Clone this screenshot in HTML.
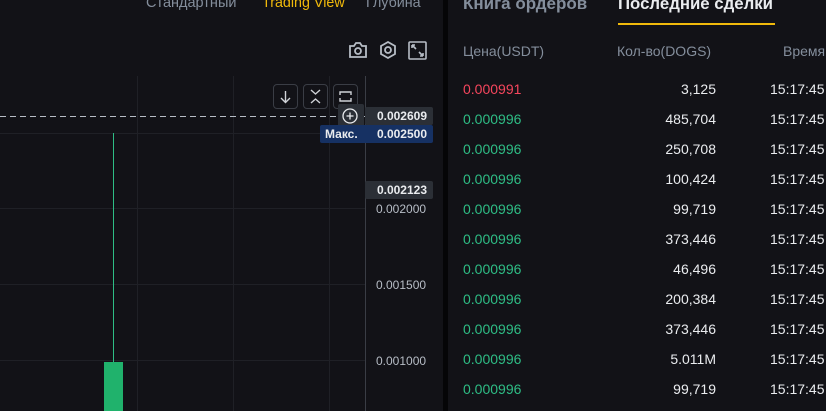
<!DOCTYPE html>
<html><head><meta charset="utf-8"><style>
*{margin:0;padding:0;box-sizing:border-box}
body{width:826px;height:411px;overflow:hidden;background:#121217;font-family:"Liberation Sans","DejaVu Sans",sans-serif;position:relative}
.a{position:absolute;white-space:nowrap}
.gv{position:absolute;top:76px;bottom:0;width:1px;background:#1f2026}
.gh{position:absolute;left:0;width:365px;height:1px;background:#1f2026}
.tag{position:absolute;height:18px;font-size:12px;font-weight:bold;color:#eaecef;line-height:18px;padding-right:6px;text-align:right}
.ax{position:absolute;left:376px;font-size:12px;color:#b7bdc6}
.btn{position:absolute;top:84px;width:25px;height:25px;border:1px solid #3a3d45;border-radius:4px}
.row{position:absolute;left:463px;font-size:14px;height:20px;line-height:20px}
.p{position:absolute;left:0;color:#2ebd85}
.q{position:absolute;left:150px;width:103px;text-align:right;color:#eaecef}
.t{position:absolute;left:307px;color:#eaecef}
</style></head><body>
<div class="a" style="left:146px;top:-5px;font-size:14.5px;color:#848e9c">Стандартный</div>
<div class="a" style="left:262px;top:-5px;font-size:14.3px;color:#f0b90b">Trading View</div>
<div class="a" style="left:366px;top:-5px;font-size:14.3px;color:#848e9c">Глубина</div>
<svg class="a" style="left:348px;top:41px" width="20" height="18" viewBox="0 0 20 18" fill="none" stroke="#b7bdc6" stroke-width="1.8"><path d="M2 5h4l2-3h4l2 3h4v11H2z"/><circle cx="10" cy="10" r="3"/></svg>
<svg class="a" style="left:378px;top:40px" width="20" height="20" viewBox="0 0 20 20" fill="none" stroke="#b7bdc6" stroke-width="1.8"><path d="M10 2l7 4v8l-7 4-7-4V6z"/><circle cx="10" cy="10" r="3"/></svg>
<svg class="a" style="left:408px;top:41px" width="19" height="19" viewBox="0 0 19 19" fill="none" stroke="#b7bdc6" stroke-width="1.6"><rect x="1" y="1" width="17" height="17" rx="1"/><path d="M4 4l4 4M4 4h3M4 4v3M15 15l-4-4M15 15h-3M15 15v-3"/></svg>
<div class="gv" style="left:137px"></div><div class="gv" style="left:233px"></div><div class="gv" style="left:329px"></div>
<div class="gh" style="top:133px"></div><div class="gh" style="top:208px"></div><div class="gh" style="top:284px"></div><div class="gh" style="top:360px"></div>
<div style="position:absolute;left:365px;top:76px;bottom:0;width:1px;background:#3a3d45"></div>
<svg class="a" style="left:0;top:116px" width="365" height="2"><line x1="0" y1="0.5" x2="365" y2="0.5" stroke="#b7bdc6" stroke-width="1" stroke-dasharray="6 4"/></svg>
<div style="position:absolute;left:113px;top:133px;width:1px;height:230px;background:#2ebd85"></div>
<div style="position:absolute;left:104px;top:362px;width:19px;height:49px;background:#20b26c"></div>
<div class="btn" style="left:273px"></div><div class="btn" style="left:303px"></div><div class="btn" style="left:333px"></div>
<svg class="a" style="left:273px;top:84px" width="25" height="25" fill="none" stroke="#d0d3d8" stroke-width="1.4"><path d="M12.5 7v11M8 14l4.5 4.5 4.5-4.5"/></svg>
<svg class="a" style="left:303px;top:84px" width="25" height="25" fill="none" stroke="#d0d3d8" stroke-width="1.4"><path d="M8 6l4.5 4 4.5-4M8 19l4.5-4 4.5 4"/></svg>
<svg class="a" style="left:333px;top:84px" width="25" height="25" fill="none" stroke="#d0d3d8" stroke-width="1.4"><path d="M7 11V8h11v3M7 14v3h11v-3"/></svg>
<div style="position:absolute;left:338px;top:104px;width:26px;height:24px;background:#2b2f36;border-radius:2px"></div>
<svg class="a" style="left:341px;top:107px" width="18" height="18" fill="none" stroke="#eaecef" stroke-width="1.3"><circle cx="9" cy="9" r="7"/><path d="M9 5.5v7M5.5 9h7"/></svg>
<div class="tag" style="left:365px;top:107px;width:68px;background:#2b2f36;border-radius:2px">0.002609</div>
<div class="tag" style="left:320px;top:125px;width:113px;background:#163163;border-radius:2px"><span style="position:absolute;left:5px">Макс.</span>0.002500</div>
<div class="tag" style="left:365px;top:181px;width:68px;background:#2b2f36;border-radius:2px">0.002123</div>
<div class="ax" style="top:202px">0.002000</div>
<div class="ax" style="top:278px">0.001500</div>
<div class="ax" style="top:354px">0.001000</div>
<div style="position:absolute;left:443px;top:0;width:5px;height:411px;background:#050507"></div>
<div class="a" style="left:463px;top:-6px;font-size:17px;font-weight:bold;color:#848e9c">Книга ордеров</div>
<div class="a" style="left:618px;top:-6px;font-size:16.8px;font-weight:bold;color:#eaecef">Последние сделки</div>
<div style="position:absolute;left:618px;top:23px;width:157px;height:2px;background:#f0b90b"></div>
<div class="a" style="left:463px;top:43px;font-size:14px;color:#848e9c">Цена(USDT)</div>
<div class="a" style="left:617px;top:43px;font-size:14px;color:#848e9c">Кол-во(DOGS)</div>
<div class="a" style="left:783px;top:43px;font-size:14px;color:#848e9c">Время</div>
<div class="row" style="top:79px"><span class="p" style="color:#f6465d">0.000991</span><span class="q">3,125</span><span class="t">15:17:45</span></div>
<div class="row" style="top:109px"><span class="p">0.000996</span><span class="q">485,704</span><span class="t">15:17:45</span></div>
<div class="row" style="top:139px"><span class="p">0.000996</span><span class="q">250,708</span><span class="t">15:17:45</span></div>
<div class="row" style="top:169px"><span class="p">0.000996</span><span class="q">100,424</span><span class="t">15:17:45</span></div>
<div class="row" style="top:199px"><span class="p">0.000996</span><span class="q">99,719</span><span class="t">15:17:45</span></div>
<div class="row" style="top:229px"><span class="p">0.000996</span><span class="q">373,446</span><span class="t">15:17:45</span></div>
<div class="row" style="top:259px"><span class="p">0.000996</span><span class="q">46,496</span><span class="t">15:17:45</span></div>
<div class="row" style="top:289px"><span class="p">0.000996</span><span class="q">200,384</span><span class="t">15:17:45</span></div>
<div class="row" style="top:319px"><span class="p">0.000996</span><span class="q">373,446</span><span class="t">15:17:45</span></div>
<div class="row" style="top:349px"><span class="p">0.000996</span><span class="q">5.011M</span><span class="t">15:17:45</span></div>
<div class="row" style="top:379px"><span class="p">0.000996</span><span class="q">99,719</span><span class="t">15:17:45</span></div>
</body></html>
